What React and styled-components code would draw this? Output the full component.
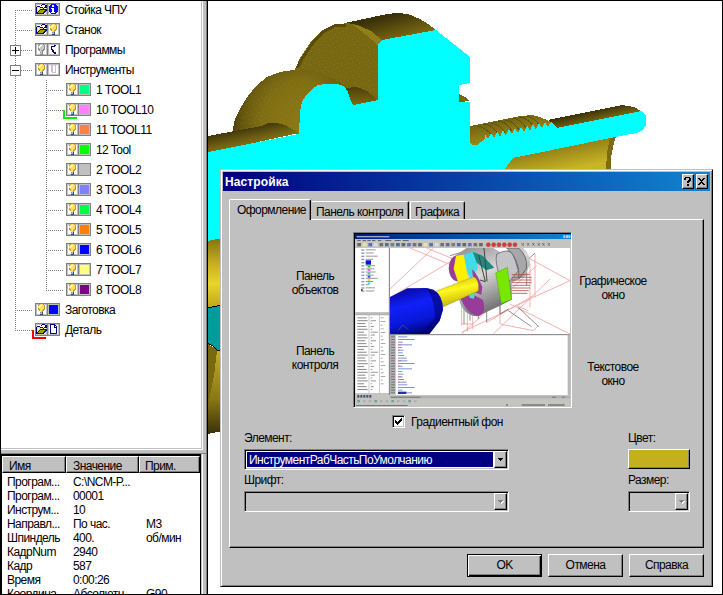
import React from "react";
import styled, { createGlobalStyle, css } from "styled-components";

const Global = createGlobalStyle`
  * { box-sizing: border-box; }
  body { margin: 0; background: #fff; overflow: hidden; }
`;

const Screen = styled.div`
  position: relative;
  display: flex;
  width: 723px;
  height: 595px;
  border: 1px solid #000;
  background: #fff;
  overflow: hidden;
  font: 12px/14px "Liberation Sans", Arial, sans-serif;
  letter-spacing: -0.55px;
  color: #000;
`;

const Text = styled.span`
  white-space: nowrap;
`;

/* ---------- Left column ---------- */
const Sidebar = styled.aside`
  display: flex;
  flex-direction: column;
  flex: none;
  width: 207px;
  background: #c0c0c0;
  border-right: 1px solid #000;
  box-shadow: inset -1px 0 #808080;
`;

const TreePane = styled.div`
  flex: none;
  width: 202px;
  height: 449px;
  background: #fff;
  border: solid #fff;
  border-width: 0 1px 1px 0;
  box-shadow: inset -1px -1px #c0c0c0;
`;

const TreeRow = styled.div`
  position: relative;
  display: flex;
  align-items: center;
  height: 20px;
  &:first-child { margin-top: -1px; }
`;

const Gutter = styled.svg`
  flex: none;
  display: block;
  margin-left: -1px;
`;

const IconPair = styled.span`
  position: relative;
  display: flex;
  flex: none;
  gap: 1px;
  width: 25px;
  height: 13px;
  margin: 0 5px 1px 0;
  border: 1px solid #808080;
  background: #808080;
`;

const IconCell = styled.span`
  flex: none;
  width: 11px;
  height: 11px;
  border: 1px solid #c0c0c0;
  background: ${(p) => p.$color || "#fff"};
  & > svg { display: block; margin: -1px; }
`;

const Corner = styled.i`
  position: absolute;
  left: ${(p) => p.$x}px;
  top: 10px;
  width: 14px;
  height: 9px;
  border: solid ${(p) => p.$color};
  border-width: 0 0 2px 2px;
`;

const PALETTE = {
  y: "#ffe060", W: "#fffad8", o: "#d09828", g: "#909090", b: "#304878", c: "#a0c0e0",
  n: "#000080", w: "#ffffff", k: "#202010", v: "#a8a000", B: "#0000ff", p: "#d8b8d8", s: "#c8c8c8", d: "#888888",
};

const GLYPHS = {
  bulb: ["...oyyyo...", "..oyWWyyo..", "..yWWyyyo..", "..yWyyyyo..", "..oyyyyyo..", "..ooyyyoo..", "...oyyoo...", "....yyo....", "....gcb....", "....ccb....", "....bbb...."],
  dim: ["...dsssd...", "..dswwssd..", "..swwsssd..", "..swssssd..", "..dsssssd..", "..ddsssdd..", "...dssdd...", "....ssd....", "....gsg....", "....ssd....", "....ddd...."],
  folder: ["......nnn..", ".....n...nn", ".nnn.....nn", "nyyynnn.nnn", "nyWyyyyn...", "nyWynnnnnnn", "nyynvvvvvkn", "nynvvvvvkn.", "nnvvvvvkn..", "nkkkkkkn...", "..........."],
  info: ["...BBBBB...", "..BBwwBBB..", ".BBBwwBBBB.", ".BBBBBBBBB.", ".BBwwwBBBB.", ".BBBwwBBBB.", ".BBBwwBBBB.", ".BBBwwBBBB.", "..BwwwwBB..", "...BBBBB...", "..........."],
  prog: ["...........", "......nn...", "...nnnn....", "...n.......", "...n.......", "...nn......", "....nn.....", "....nn.....", ".....nnn...", "......nn...", "..........."],
  tools: ["...........", "...pp.pp...", "...pp..p...", "...pp..p...", "...pp..p...", "...pp..p...", "...pp..p...", "...pp..p...", "....pppp...", "...........", "..........."],
  doc: ["..nnnnn....", "..nwwwnn...", "..nwwwnwn..", "..nwwwnnn..", "..nwwwwwn..", "..nwwwwwn..", "..nwwwwwn..", "..nwwwwwn..", "..nwwwwwn..", "..nnnnnnn..", "..........."],
};

function Glyph({ name }) {
  return (
    <svg width="11" height="11" shapeRendering="crispEdges">
      {GLYPHS[name].flatMap((line, y) =>
        [...line].map((ch, x) => (ch === "." ? null : <rect key={x + "-" + y} x={x} y={y} width="1" height="1" fill={PALETTE[ch]} />))
      )}
    </svg>
  );
}

const TREE = [
  { t: "Стойка ЧПУ", a: "folder", b: "info", first: true },
  { t: "Станок", a: "folder", b: "bulb" },
  { t: "Программы", a: "dim", b: "prog", box: "+" },
  { t: "Инструменты", a: "bulb", b: "tools", box: "-" },
  { t: "1 TOOL1", c: "#00ff80", sub: true },
  { t: "10 TOOL10", c: "#ff80ff", sub: true, mark: "#00f000" },
  { t: "11 TOOL11", c: "#ff8040", sub: true },
  { t: "12 Tool", c: "#00ff00", sub: true },
  { t: "2 TOOL2", c: "#c0c0c0", sub: true },
  { t: "3 TOOL3", c: "#8080ff", sub: true },
  { t: "4 TOOL4", c: "#00ff40", sub: true },
  { t: "5 TOOL5", c: "#ff8000", sub: true },
  { t: "6 TOOL6", c: "#0000ff", sub: true },
  { t: "7 TOOL7", c: "#ffff80", sub: true },
  { t: "8 TOOL8", c: "#800080", sub: true, last: true },
  { t: "Заготовка", a: "bulb", c: "#0000ff" },
  { t: "Деталь", a: "folder", b: "doc", last: true, mark: "#f00000" },
];

function Branch({ r }) {
  const w = r.sub ? 66 : 35;
  const dots = { stroke: "#808080", strokeDasharray: "1 1" };
  return (
    <Gutter width={w} height="20" shapeRendering="crispEdges">
      <path {...dots} d={r.first ? "M15.5 10V20" : !r.sub && r.last ? "M15.5 0V10" : "M15.5 0V20"} />
      {r.sub && <path {...dots} d={r.last ? "M46.5 0V10" : "M46.5 0V20"} />}
      <path {...dots} d={r.sub ? "M46 10.5H63" : "M15 10.5H32"} />
      {r.box && (
        <g>
          <rect x="10.5" y="5.5" width="10" height="10" fill="#fff" stroke="#808080" />
          <path stroke="#000" d={r.box === "+" ? "M12 10.5H19M15.5 7V14" : "M12 10.5H19"} />
        </g>
      )}
    </Gutter>
  );
}

const Splitter = styled.div`
  flex: none;
  height: 4px;
  border-bottom: 1px solid #808080;
`;

const WatchPane = styled.div`
  flex: 1;
  min-height: 0;
  width: 200px;
  overflow: hidden;
  background: #fff;
  border: solid #000;
  border-width: 2px 1px 0;
  box-shadow: 1px 0 #c0c0c0, 2px 0 #fff;
`;

const Columns = styled.div`
  display: grid;
  grid-template-columns: 64px 73px 61px;
`;

const HeadCell = styled.div`
  height: 17px;
  padding: 2px 0 0 ${(p) => p.$pad}px;
  background: #c0c0c0;
  border: 1px solid;
  border-color: #fff #000 #000 #fff;
  box-shadow: inset -1px -1px #808080;
`;

const WatchBody = styled.div`
  display: grid;
  grid-template-columns: 66px 73px 60px;
  grid-auto-rows: 14px;
  padding: 2px 0 0 5px;
`;

const WATCH = [
  ["Програм...", "C:\\NCM-P...", ""],
  ["Програм...", "00001", ""],
  ["Инструм...", "10", ""],
  ["Направл...", "По час.", "M3"],
  ["Шпиндель", "400.", "об/мин"],
  ["КадрNum", "2940", ""],
  ["Кадр", "587", ""],
  ["Время", "0:00:26", ""],
  ["Координа...", "Абсолютн...", "G90"],
];

/* ---------- 3D view ---------- */
const Viewport = styled.svg`
  flex: none;
  display: block;
`;

function threadTeeth() {
  let d = "";
  for (let i = 0; i < 11; i++) {
    const x = 485 + i * 6;
    const y = 134 - i * 1.2;
    d += `L${x} ${y}L${x + 3} ${y + 5}`;
  }
  return d;
}

function Part() {
  return (
    <Viewport width="514" height="593" viewBox="208 1 514 593" shapeRendering="crispEdges">
      <defs>
        <linearGradient id="shaft" gradientUnits="userSpaceOnUse" x1="400" y1="13" x2="407" y2="38">
          <stop offset="0" stopColor="#3c320a" /><stop offset="1" stopColor="#7c6b12" />
        </linearGradient>
        <linearGradient id="stub" gradientUnits="userSpaceOnUse" x1="245" y1="128" x2="249" y2="146">
          <stop offset="0" stopColor="#40360a" /><stop offset=".5" stopColor="#665810" /><stop offset="1" stopColor="#86741a" />
        </linearGradient>
        <radialGradient id="torus" gradientUnits="userSpaceOnUse" cx="302" cy="124" r="74" gradientTransform="translate(0 -12) scale(1 1.1)">
          <stop offset="0" stopColor="#8c7a16" /><stop offset=".55" stopColor="#806e14" /><stop offset=".8" stopColor="#675810" /><stop offset="1" stopColor="#40360a" />
        </radialGradient>
        <linearGradient id="tube" gradientUnits="userSpaceOnUse" x1="590" y1="110" x2="593" y2="123">
          <stop offset="0" stopColor="#352c08" /><stop offset="1" stopColor="#7c6b12" />
        </linearGradient>
        <linearGradient id="pocket" x1="0" y1="0" x2="0" y2="1">
          <stop offset="0" stopColor="#4c400c" /><stop offset="1" stopColor="#7c6b12" />
        </linearGradient>
        <linearGradient id="thread" gradientUnits="userSpaceOnUse" x1="500" y1="118" x2="505" y2="140">
          <stop offset="0" stopColor="#6d5e10" /><stop offset="1" stopColor="#a08c18" />
        </linearGradient>
        <linearGradient id="bore" gradientUnits="userSpaceOnUse" x1="560" y1="145" x2="565" y2="170">
          <stop offset="0" stopColor="#8e7c14" /><stop offset="1" stopColor="#c8b424" />
        </linearGradient>
        <linearGradient id="inner" x1="0" y1="0" x2="0" y2="1">
          <stop offset="0" stopColor="#83720f" /><stop offset=".35" stopColor="#c4ac20" /><stop offset=".65" stopColor="#ead42c" /><stop offset="1" stopColor="#bda51c" />
        </linearGradient>
        <linearGradient id="lower" gradientUnits="userSpaceOnUse" x1="215" y1="350" x2="215" y2="433">
          <stop offset="0" stopColor="#c4ae20" /><stop offset=".6" stopColor="#887614" /><stop offset="1" stopColor="#3c320a" />
        </linearGradient>
        <pattern id="grain" width="11" height="13" patternUnits="userSpaceOnUse">
          <path fill="#98861c" d="M0 0h1v1H0zM6 2h1v1H6zM2 5h1v1H2zM9 6h1v1H9zM5 8h1v1H5zM0 10h1v1H0zM7 11h1v1H7zM3 12h1v1H3z" />
        </pattern>
      </defs>
      <path fill="url(#shaft)" d="M345 23L387 14L397 13L408 14L420 19L428 24L436 30L382 41L360 35Z" />
      <path fill="#786812" d="M294 72L300 58L310 43L321 31L333 25L347 23L358 25L370 31L382 40L378 45V100L353 105L330 90Z" />
      <path fill="url(#grain)" opacity=".5" d="M294 72L310 43L325 31L345 26L378 45V96L345 86Z" />
      <path fill="#907e18" d="M352 24L360 26L371 31L382 40L378 45L366 35Z" />
      <path fill="none" stroke="#584b0c" strokeWidth="3" d="M297 68L302 59L312 44L323 32L334 26L346 25" />
      <path fill="url(#pocket)" d="M345 88L357 87L367 91L377 99V100L353 105Z" />
      <path fill="url(#torus)" d="M232 133L235 119L241 107L248 96L256 86L267 77L280 72L293 70L309 70L320 73L334 79L345 86L320 100L300 134Z" />
      <path fill="url(#grain)" opacity=".4" d="M238 126L250 101L267 84L290 78L326 84L305 98L299 133L275 122Z" />
      <path fill="url(#stub)" d="M208 136L262 126L268 123L277 123L285 125L299 133L208 153Z" />
      <path fill="#786812" d="M459 94L465 97L470 101L459 102Z" />
      <path fill="url(#thread)" d="M470 126L521 116L532 115L540 117L549 121L557 128L555 150H470Z" />
      <path fill="none" stroke="#5f510e" d="M477 126q9 1 15 10M484 124q9 1 14 10M491 123q9 1 14 10M498 121q9 1 14 10M505 120q9 1 14 10M512 118q9 1 14 10M519 117q9 1 14 9M526 116q9 1 13 9" />
      <path fill="url(#tube)" d="M548 120L612 107L622 105L634 107L641 111L557 129Z" />
      <path fill="url(#bore)" d="M513 157L615 136L611 153L609 170H500Z" />
      <path fill="#7c6b12" d="M610 138L616 136L613 147L611 158V170H606L607 153Z" />
      <path fill="#0ff" d={`M208 152L299 134L300 112L302 102L306 95L312 89L318 85L325 84H337L344 86L348 92L351 101L353 105L378 100V45L382 40L436 30L470 57V83L459 85V102H470V143L472 145H477L481 142L485 138${threadTeeth()}L551 122L557 128L641 111L646 116V125L643 130L637 133L625 135L513 158L504 170V245H208Z`} />
      <path fill="url(#inner)" d="M208 241L222 238V306L208 308Z" />
      <path fill="#009c9c" stroke="#000" d="M207 308L222 305V352L217 350L213 346L207 343Z" />
      <path fill="url(#lower)" d="M208 344L213 347L217 351H222V431L208 434Z" />
      <path fill="#786812" d="M208 344L213 347L217 351L214 376L208 405Z" />
    </Viewport>
  );
}

/* ---------- Dialog ---------- */
const Dialog = styled.section`
  position: absolute;
  left: 219px;
  top: 168px;
  width: 493px;
  height: 418px;
  padding: 1px;
  background: #c0c0c0;
  border: 1px solid;
  border-color: #c0c0c0 #000 #000 #c0c0c0;
  box-shadow: inset 1px 1px #fff, inset -1px -1px #808080;
`;

const TitleBar = styled.header`
  display: flex;
  align-items: center;
  gap: 2px;
  height: 19px;
  margin: 1px 1px 0;
  padding: 0 2px;
  background: linear-gradient(90deg, #000080, #1084d0);
  color: #fff;
  font-weight: 700;
`;

const Title = styled.div`
  flex: 1;
  padding-top: 1px;
  letter-spacing: 0.1px;
`;

const raised = css`
  border: 1px solid;
  border-color: #fff #000 #000 #fff;
  box-shadow: inset -1px -1px #808080;
  background: #c0c0c0;
`;

const CaptionButton = styled.button`
  ${raised}
  display: grid;
  place-items: center;
  width: 12px;
  height: 15px;
  padding: 0;
  margin-bottom: 1px;
`;

const Tabs = styled.nav`
  display: flex;
  align-items: flex-end;
  height: 28px;
  margin-left: 7px;
`;

const Tab = styled.div`
  height: ${(p) => (p.$active ? 21 : 18)}px;
  width: ${(p) => p.$w}px;
  padding: ${(p) => (p.$active ? "3px 0 0 7px" : "3px 0 0 4px")};
  margin: 0 ${(p) => p.$gap || 0}px ${(p) => (p.$active ? -1 : 0)}px 0;
  background: #c0c0c0;
  border: solid;
  border-width: 1px 1px 0;
  border-color: #fff #000 #000 #fff;
  border-left-color: ${(p) => (p.$plain ? "transparent" : "#fff")};
  border-radius: 2px 2px 0 0;
  box-shadow: inset -1px 0 #808080;
`;

const Panel = styled.div`
  display: flex;
  flex-direction: column;
  width: 475px;
  height: 329px;
  margin-left: 7px;
  padding: 12px 13px 0 14px;
  ${raised}
`;

const PreviewRow = styled.div`
  display: grid;
  grid-template-columns: 109px 219px 82px;
  height: 176px;
`;

const Captions = styled.div`
  display: flex;
  flex-direction: column;
  gap: ${(p) => p.$gap}px;
  padding: ${(p) => p.$top}px 0 0 ${(p) => p.$left}px;
  text-align: center;
  line-height: 13.5px;
`;

const Frame = styled.div`
  border: 1px solid;
  border-color: #808080 #fff #fff #808080;
  box-shadow: inset 1px 1px #000;
  padding: 1px 0 0 1px;
  & > svg { display: block; }
`;

const CheckRow = styled.label`
  display: flex;
  align-items: center;
  gap: 6px;
  height: 13px;
  margin: 7px 0 0 148px;
`;

const CheckBox = styled.span`
  width: 13px;
  height: 13px;
  background: #fff;
  border: 1px solid;
  border-color: #808080 #fff #fff #808080;
  box-shadow: inset 1px 1px #000, inset -1px -1px #c0c0c0;
  & > svg { display: block; }
`;

const FieldRow = styled.div`
  display: flex;
  justify-content: space-between;
  margin-top: ${(p) => p.$top}px;
`;

const Field = styled.div`
  display: flex;
  flex-direction: column;
  gap: 4px;
  width: ${(p) => p.$w}px;
`;

const Combo = styled.div`
  display: flex;
  height: 21px;
  padding: 1px;
  border: 1px solid;
  border-color: #808080 #fff #fff #808080;
  box-shadow: inset 1px 1px #000, inset -1px -1px #c0c0c0;
  background: ${(p) => (p.$enabled ? "#fff" : "#c0c0c0")};
`;

const ComboValue = styled.div`
  flex: 1;
  margin: 1px;
  padding: 1px 0 0 2px;
  background: ${(p) => (p.$enabled ? "#000080" : "#c0c0c0")};
  color: #fff;
`;

const DropButton = styled.div`
  ${raised}
  display: grid;
  place-items: center;
  width: 13px;
  height: 17px;
`;

const Swatch = styled.div`
  ${raised}
  height: 20px;
  background: #c4b01c;
`;

const Footer = styled.footer`
  display: flex;
  justify-content: flex-end;
  gap: 6px;
  margin: 6px 7px 0 0;
`;

const PushButton = styled.button`
  ${raised}
  width: 75px;
  height: 23px;
  padding: 0 0 1px;
  font: inherit;
  letter-spacing: inherit;
  color: #000;
  ${(p) => p.$default && css`
    border-color: #000;
    box-shadow: inset 1px 1px #fff, inset -1px -1px #000, inset -2px -2px #808080;
  `}
`;

function Arrow({ enabled }) {
  return (
    <svg width="6" height="4" shapeRendering="crispEdges">
      {!enabled && <path fill="#fff" d="M1 1h5v1h-1v1h-1v1h-1v-1h-1v-1h-1z" />}
      <path fill={enabled ? "#000" : "#808080"} d="M0 0h5v1h-1v1h-1v1h-1v-1h-1v-1h-1z" />
    </svg>
  );
}

const ComboBox = ({ value, enabled }) => (
  <Combo $enabled={enabled}>
    <ComboValue $enabled={enabled}><Text>{value}</Text></ComboValue>
    <DropButton><Arrow enabled={enabled} /></DropButton>
  </Combo>
);

function Scribbles({ x, y, n, pitch, widths, color, h = 3 }) {
  return Array.from({ length: n }, (_, i) => (
    <rect key={i} x={x} y={y + i * pitch} width={widths[i % widths.length]} height={h} fill={color} />
  ));
}

function Preview() {
  const red = "#f4a0a0";
  const tool = ["#404040", "#f8f0a0", "#3048c0", "#e8e8e8", "#505050", "#304880", "#606060", "#2040a0", "#404040", "#3850b0", "#505050"];
  return (
    <svg width="216" height="173" viewBox="15 15 648 519" preserveAspectRatio="none">
      <defs>
        <linearGradient id="pt" x1="0" x2="1"><stop offset="0" stopColor="#001c80" /><stop offset="1" stopColor="#1084d0" /></linearGradient>
        <linearGradient id="metal" x1="0" y1="0" x2=".5" y2="1"><stop offset="0" stopColor="#8c8c8c" /><stop offset=".45" stopColor="#d8d8d8" /><stop offset="1" stopColor="#606060" /></linearGradient>
        <linearGradient id="blue" x1=".3" y1="0" x2=".6" y2="1"><stop offset="0" stopColor="#0808a0" /><stop offset=".35" stopColor="#1020f8" /><stop offset=".7" stopColor="#0818d8" /><stop offset="1" stopColor="#000070" /></linearGradient>
        <linearGradient id="yel" x1=".3" y1="0" x2=".6" y2="1"><stop offset="0" stopColor="#c8b800" /><stop offset=".4" stopColor="#fff820" /><stop offset="1" stopColor="#b0a000" /></linearGradient>
        <clipPath id="view"><rect x="120" y="57" width="540" height="258" /></clipPath>
      </defs>
      <rect x="15" y="15" width="648" height="519" fill="#c4c4c0" />
      <rect x="15" y="15" width="648" height="15" fill="url(#pt)" />
      <rect x="20" y="21" width="98" height="4" fill="#c0c8e8" opacity=".8" />
      <path fill="#ccc" d="M640 19h6v8h-6zM648 19h6v8h-6zM655 19h6v8h-6z" />
      {[22, 38, 52, 66, 84, 106, 134, 158].map((x) => <rect key={x} x={x} y="33" width={x > 100 ? 18 : 10} height="3" fill="#666" />)}
      {Array.from({ length: 23 }, (_, i) => <rect key={i} x={22 + i * 16.6} y="42" width="11" height="10" fill={tool[i % tool.length]} opacity=".7" />)}
      {[415, 431, 447, 463, 479, 495].map((x) => <circle key={x} cx={x} cy="47" r="6" fill="#e03838" stroke="#802020" />)}
      {[518, 534, 550, 566, 580, 596].map((x) => <path key={x} d={`M${x - 4} 42l8 8M${x + 3} 42l-5 8`} stroke="#505050" strokeWidth="2" />)}
      <rect x="16" y="57" width="101" height="192" fill="#fff" />
      <Scribbles x={47} y={61} n={14} pitch={9.5} widths={[30, 24, 36, 22, 10, 28, 26]} color="#999" />
      <Scribbles x={34} y={61} n={14} pitch={9.5} widths={[9]} color="#8298bc" h={4} />
      <rect x="47" y="94" width="16" height="13" fill="#0018d0" />
      {["#20e020", "#f060e0", "#60b0a0", "#3050f0", "#f0e040", "#40e0f0"].map((c, i) => <rect key={c} x="53" y={110 + i * 10} width="8" height="6" fill={c} />)}
      <path fill="#c02020" d="M33 180h5v6h-5z" />
      <rect x="16" y="253" width="101" height="239" fill="#fff" />
      <path fill="#808080" d="M16 253h101v6H16zM56 259h2v233h-2zM88 259h2v233h-2z" opacity=".6" />
      <Scribbles x={22} y={265} n={26} pitch={8.6} widths={[28, 31, 24, 27, 31, 20]} color="#888" />
      <Scribbles x={62} y={265} n={26} pitch={8.6} widths={[5, 16, 4, 10, 5, 22, 13]} color="#999" />
      <Scribbles x={92} y={265} n={19} pitch={11} widths={[9, 14, 6]} color="#aaa" />
      <rect x="120" y="57" width="540" height="258" fill="#fff" />
      <g clipPath="url(#view)">
        <path fill="none" stroke={red} strokeWidth="2.5" d="M120 180L250 57M120 206L370 57M180 57L320 115M230 57L310 90M480 57L660 155M560 110L335 315M600 150L430 315M660 155L550 205L450 255L335 310M480 225L660 315M335 220V290M352 220V308M368 220V300M450 210V285L550 305L565 290M500 230L535 245M530 90L430 205M540 105V235M555 75V205M410 280L550 200M335 285H370" />
        <path fill="none" stroke="#555" strokeWidth="2" d="M300 80L380 57M342 205V285M360 215V275M385 200V270M475 245L545 293M505 235L566 293M450 160V255L475 240M555 72L530 95V170M475 65V160M410 245V280" />
        <path fill="url(#metal)" d="M318 78L350 57H430L455 72L490 57H520Q541 75 540 105L525 140L485 161L485 212L450 230L382 262Q340 260 326 210Z" />
        <path fill="#c4c4c8" stroke="#555" strokeWidth="2" d="M440 75Q475 57 490 75L505 125L480 155L450 145Q434 100 440 75Z" />
        <path fill="#a8a8ac" stroke="#444" strokeWidth="2" d="M470 57H505Q534 80 529 119L507 149Q510 91 470 57Z" />
        <path fill="#983c9c" d="M320 78Q297 85 296 118Q298 150 319 157L340 157L329 202Q350 257 387 261Q410 253 399 213L366 195L340 160L318 140Z" />
        <path fill="#fff000" d="M318 80L342 77L355 156L330 177L311 119Z" />
        <path fill="#40dce8" d="M342 78L375 65L383 118L362 150L351 127Z" />
        <path fill="#208880" d="M368 68L398 80L433 116L409 124L380 101Z" />
        <path fill="#98409c" d="M366 121Q382 134 397 174L394 198L375 190Z" />
        <path fill="#60d0d0" d="M355 196L375 191L372 209L360 207Z" />
        <path stroke="#444" strokeWidth="3" fill="none" d="M386 78L406 158L390 153M402 57L411 157" />
        <path fill="#78e800" stroke="#408000" d="M437 132L472 115L485 211L454 224Z" />
        <path fill="url(#yel)" stroke="#807400" d="M254 188L372 143Q389 153 385 186L267 239Z" />
        <path fill="url(#blue)" d="M120 204L172 178L229 177L250 182Q278 197 279 242L269 275L238 315H120Z" />
        <path fill="#000068" opacity=".55" d="M229 177L250 182Q278 197 279 242L269 275L238 315H212L255 266Q254 210 229 177Z" />
        <path stroke="#b04848" strokeWidth="2.4" d="M485 137H540M485 145H545M485 153H545M485 161H545M485 169H540M485 177H540M485 185H536M485 193H532" />
        <path stroke="#447" strokeWidth="3" fill="none" d="M145 304L158 288L176 302" />
      </g>
      <rect x="120" y="317" width="540" height="183" fill="#fff" />
      <rect x="120" y="317" width="17" height="180" fill="#b0b0b0" />
      <path stroke="#808080" strokeWidth="3" d="M118 57V500M118 317H660" />
      <Scribbles x={123} y={322} n={22} pitch={8} widths={[12]} color="#777" />
      <Scribbles x={144} y={322} n={22} pitch={8} widths={[28, 50, 14, 42, 12, 16, 14, 18, 26]} color="#8090d8" />
      <Scribbles x={144} y={330} n={9} pitch={16} widths={[13, 10, 5]} color="#f07070" />
      <rect x="144" y="488" width="25" height="7" fill="#2030b0" />
      <path fill="#b8b8b8" d="M653 317h8v183h-8z" />
      <rect x="15" y="498" width="648" height="36" fill="#c4c4c0" />
      <rect x="120" y="501" width="540" height="7" fill="#b0b0b0" />
      {[22, 31, 40, 49, 58].map((x) => <rect key={x} x={x} y="498" width="6" height="8" fill="#405078" />)}
      {Array.from({ length: 11 }, (_, i) => <rect key={i} x={22 + i * 17} y="513" width="8" height="7" fill={i % 3 ? "#b0b0b0" : "#70a0a0"} />)}
      <path fill="#777" d="M122 503h90v3h-90zM18 528h155v3H18zM606 503h12v3h-12zM636 503h8v3h-8zM515 526h70v4h-70zM594 526h50v4h-50zM468 526h6v4h-6z" />
    </svg>
  );
}

export default function App() {
  return (
    <Screen>
      <Global />
      <Sidebar>
        <TreePane>
          {TREE.map((r) => (
            <TreeRow key={r.t}>
              <Branch r={r} />
              {r.mark && <Corner $x={r.sub ? 62 : 31} $color={r.mark} />}
              <IconPair>
                <IconCell><Glyph name={r.a || "bulb"} /></IconCell>
                <IconCell $color={r.c}>{r.b && <Glyph name={r.b} />}</IconCell>
              </IconPair>
              <Text>{r.t}</Text>
            </TreeRow>
          ))}
        </TreePane>
        <Splitter />
        <WatchPane>
          <Columns>
            <HeadCell $pad={6}><Text>Имя</Text></HeadCell>
            <HeadCell $pad={6}><Text>Значение</Text></HeadCell>
            <HeadCell $pad={5}><Text>Прим.</Text></HeadCell>
          </Columns>
          <WatchBody>
            {WATCH.flatMap((row, i) => row.map((t, j) => <Text key={i + "-" + j}>{t}</Text>))}
          </WatchBody>
        </WatchPane>
      </Sidebar>
      <Part />
      <Dialog>
        <TitleBar>
          <Title><Text>Настройка</Text></Title>
          <CaptionButton aria-label="Справка">
            <svg width="8" height="9" shapeRendering="crispEdges"><path d="M1 0h5v1h1v3h-1v1h-1v1h-2v-2h1v-1h1v-2h-3v2h-2v-2h1zM3 7h2v2h-2z" /></svg>
          </CaptionButton>
          <CaptionButton aria-label="Закрыть">
            <svg width="8" height="7" shapeRendering="crispEdges"><path d="M0 0h2v1h1v1h1v-1h1v-1h2v1h-1v1h-1v1h-1v1h1v1h1v1h1v1h-2v-1h-1v-1h-1v1h-1v1h-2v-1h1v-1h1v-1h1v-1h-1v-1h-1v-1h-1z" /></svg>
          </CaptionButton>
        </TitleBar>
        <Tabs>
          <Tab $active $w={82}><Text>Оформление</Text></Tab>
          <Tab $w={98} $gap={1} $plain><Text>Панель контроля</Text></Tab>
          <Tab $w={55}><Text>Графика</Text></Tab>
        </Tabs>
        <Panel>
          <PreviewRow>
            <Captions $top={38} $left={33} $gap={48}>
              <div>Панель<br />объектов</div>
              <div>Панель<br />контроля</div>
            </Captions>
            <Frame><Preview /></Frame>
            <Captions $top={43} $left={0} $gap={59}>
              <div>Графическое<br />окно</div>
              <div>Текстовое<br />окно</div>
            </Captions>
          </PreviewRow>
          <CheckRow>
            <CheckBox>
              <svg width="11" height="11" shapeRendering="crispEdges"><path d="M2 4h1v1h1v1h1v-1h1v-1h1v-1h1v-1h1v3h-1v1h-1v1h-1v1h-1v1h-1v-1h-1v-1h-1z" /></svg>
            </CheckBox>
            <Text>Градиентный фон</Text>
          </CheckRow>
          <FieldRow $top={3}>
            <Field $w={265}><Text>Элемент:</Text><ComboBox enabled value="ИнструментРабЧастьПоУмолчанию" /></Field>
            <Field $w={62}><Text>Цвет:</Text><Swatch /></Field>
          </FieldRow>
          <FieldRow $top={3}>
            <Field $w={265}><Text>Шрифт:</Text><ComboBox /></Field>
            <Field $w={62}><Text>Размер:</Text><ComboBox /></Field>
          </FieldRow>
        </Panel>
        <Footer>
          <PushButton $default>OK</PushButton>
          <PushButton>Отмена</PushButton>
          <PushButton>Справка</PushButton>
        </Footer>
      </Dialog>
    </Screen>
  );
}
